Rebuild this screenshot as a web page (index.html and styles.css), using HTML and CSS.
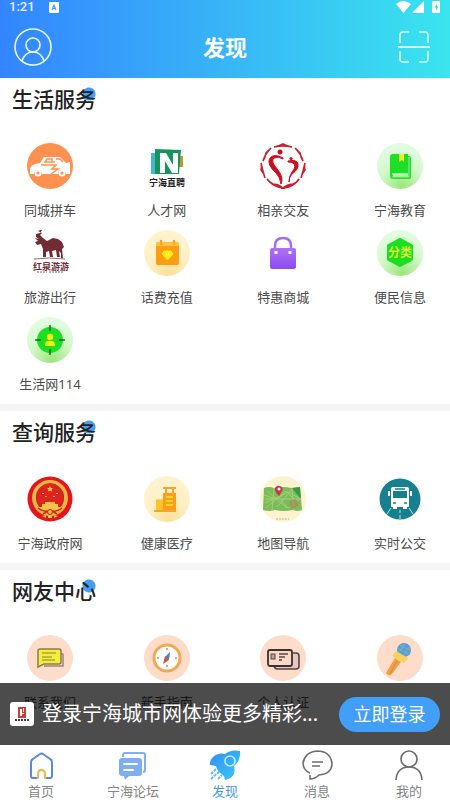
FILE: index.html
```html
<!DOCTYPE html>
<html lang="zh-CN">
<head>
<meta charset="utf-8">
<meta name="viewport" content="width=device-width, initial-scale=1">
<title>发现</title>
<link rel="stylesheet" href="styles.css">
</head>
<body>
<div class="app">
  <header class="top">
    <div class="status">
      <span class="time">1:21</span>
      <svg class="status-app" width="10" height="11" viewBox="0 0 10 11"><rect width="10" height="11" rx="1" fill="#fff"/><path d="M3 8 5 3l2 5M3.5 6.5h3" fill="none" stroke="#389bfb" stroke-width="1.2"/></svg>
      <svg class="status-signal" width="46" height="13" viewBox="0 0 46 13" fill="#fff"><path d="M0 3Q7-3 15 3L7.500 12Z"/><path d="M16 12 28 0v12Z"/><rect x="36" y="0" width="8" height="12" rx="1"/><path d="M41 3 38.500 6.500h1.500v3l2.500-4h-1.500Z" fill="#38d9ef"/></svg>
    </div>
    <div class="bar">
      <button class="icon-btn" aria-label="个人">
        <svg width="38" height="38" viewBox="0 0 38 38" fill="none" stroke="#e8fbff" stroke-width="1.6"><circle cx="19" cy="19" r="18"/><circle cx="19" cy="17" r="7"/><path d="M8 33C10 27 14 24 19 24s9 3 11 9"/></svg>
      </button>
      <h1>发现</h1>
      <button class="icon-btn" aria-label="扫一扫">
        <svg width="32" height="34" viewBox="0 0 32 34" fill="none" stroke="#d5fdff" stroke-width="1.6"><path d="M2 13V5q0-3 3-3h6M21 2h6q3 0 3 3v8M2 21v8q0 3 3 3h6M21 32h6q3 0 3-3v-8"/><path d="M0 17h32" stroke-width="2"/></svg>
      </button>
    </div>
  </header>

  <div class="stage">
    <main class="content">
      <section class="group">
        <h2><span>生活服务</span></h2>
        <div class="tiles">
          <a class="tile" href="#"><svg viewBox="0 0 46 46"><circle cx="23" cy="23" r="23" fill="#ff9150"/><path d="M13 20 17 14h16l6 6 4-1v12h-4a4 4 0 0 0-8 0H15a4 4 0 0 0-8 0H3v-6q2-4 10-5Z" fill="#fff"/><path d="M18 19l2-3h5v3ZM28 19h-8M29 16h4l3 3M14 22h15l-4 4h6l-7 5" fill="none" stroke="#ff9150" stroke-width="1.500"/><circle cx="11" cy="30" r="3.500" fill="#fff"/><circle cx="35" cy="30" r="3.500" fill="#fff"/><circle cx="11" cy="30" r="1.500" fill="#ff9150"/><circle cx="35" cy="30" r="1.500" fill="#ff9150"/></svg><span>同城拼车</span></a>
          <a class="tile" href="#"><svg viewBox="0 0 46 46"><path d="M7 10h6v21H7Z" fill="#46b5d0"/><path d="M33 13h6v11h-6Z" fill="#c19a2b"/><path d="M11 6l26 1-2 24H11Z" fill="#12965a"/><path d="M16 10h6l7 12V10h5v20h-6l-7-12v12h-5Z" fill="#fff"/><text x="5" y="43" class="logo-cn">宁海直聘</text></svg><span>人才网</span></a>
          <a class="tile" href="#"><svg viewBox="0 0 46 46"><path d="M14 4Q19 3 23 1q4 2 9 3-5-1-9-1t-9 1ZM35 5l5 5q1 5 3 8-2-7-8-13ZM45 20q-1 4 0 7-3 3-4 8 2-6 4-15ZM39 36q-1 3-6 5-5 0-10 4 11-1 16-9ZM23 45q-5-4-10-4-4-2-6-5 6 8 16 9ZM5 35q-1-5-4-8 1-3 0-7 2 9 4 15ZM3 18q2-3 3-8l5-5Q5 11 3 18Z" fill="#cc202d" stroke="#cc202d" stroke-width="1.600"/><circle cx="20" cy="9" r="2.500" fill="#c9101e"/><circle cx="31" cy="15.500" r="1.600" fill="#c9101e"/><path d="M23 15Q14 10 10 15q-4 6 6 15 4 4 5 11 3-6-3-14-8-9-4-12 4-2 9 1Z" fill="#c9101e" stroke="#c9101e"/><path d="M28 18q9-2 10 3 1 5-6 10-3 3-3 8 0-6 3-10 5-6 1-9-2-1-5-1Z" fill="#c9101e" stroke="#c9101e"/></svg><span>相亲交友</span></a>
          <a class="tile" href="#"><svg viewBox="0 0 46 46"><circle cx="23" cy="23" r="23" fill="url(#green)"/><path d="M16 11h15v20H16v3h15v-21q3 0 3 2v19q0 2-2 2H16q-3 0-3-3V14q0-3 3-3Z" fill="#1ddf29"/><path d="M15 31h16" stroke="#d5ffd2" stroke-width="1.300"/><path d="M15 34h17V14" fill="none" stroke="#92ef91"/><path d="M22 11h5v8l-2.500-2L22 19Z" fill="#eaf22c"/></svg><span>宁海教育</span></a>

          <a class="tile" href="#"><svg viewBox="0 0 46 46"><path d="M13 3 9 4v3l3 2-4-1 3 3-3 1 2 3 4-1 2 5v8h3v-5l3-1 1 6h3l-1-6 4-1 1 7h3l-1-6 2 2v5h2l-1-9 2-2-2-5-4-3-5-1-6 3-4-3-3-3 2-2-4-2 5-2Z" fill="#702b35"/><path d="M7 29q15-2 31 0" fill="none" stroke="#986b70"/><text x="6" y="40" class="logo-travel">红泉游游</text><path d="M10 42h10M22 42h14" stroke="#895f66" stroke-dasharray="2 1"/></svg><span>旅游出行</span></a>
          <a class="tile" href="#"><svg viewBox="0 0 46 46"><circle cx="23" cy="23" r="23" fill="url(#gold)"/><rect x="12" y="12" width="23" height="23" rx="2" fill="#ff9d12"/><path d="M12 16v-2q0-2 2-2h19q2 0 2 2v2Z" fill="#ffc443"/><path d="M17 11v3M30 11v3" stroke="#f7a622" stroke-width="2.500" stroke-linecap="round"/><path d="M20 21h7l2 3-5.500 6-5.500-6Z" fill="#ffef1c" stroke="#ffef1c" stroke-linejoin="round"/></svg><span>话费充值</span></a>
          <a class="tile" href="#"><svg viewBox="0 0 46 46"><path d="M15 21v-5q0-8 8-8t8 8v5" fill="none" stroke="#a96bed" stroke-width="2.500"/><path d="M12 18h22q2 0 2 2v17q0 2-2 2H12q-2 0-2-2V20q0-2 2-2Z" fill="url(#violet)"/><path d="M16 21v3M30 21v3" stroke="#fff" stroke-width="3"/></svg><span>特惠商城</span></a>
          <a class="tile" href="#"><svg viewBox="0 0 46 46"><circle cx="23" cy="23" r="23" fill="url(#green)"/><path d="M23 9 35 15.500v14L23 36 11 29.500v-14Z" fill="#1ade22" stroke="#1ade22" stroke-width="2" stroke-linejoin="round"/><text x="23" y="27" class="logo-class">分类</text></svg><span>便民信息</span></a>

          <a class="tile" href="#"><svg viewBox="0 0 46 46"><circle cx="23" cy="23" r="23" fill="url(#green)"/><circle cx="23" cy="23" r="13" fill="#1ddf22"/><path d="M23 8v6M23 32v6M8 23h6M32 23h6" stroke="#176b18" stroke-width="1.500"/><circle cx="23" cy="20" r="3.200" fill="#f0ed10"/><path d="M18 29q0-5 3-5h4q3 0 3 5Z" fill="#f0ed10"/></svg><span>生活网114</span></a>
        </div>
      </section>

      <section class="group">
        <h2><span>查询服务</span></h2>
        <div class="tiles">
          <a class="tile" href="#"><svg viewBox="0 0 46 46"><circle cx="23" cy="23" r="22.500" fill="#e8141b"/><circle cx="23" cy="22" r="16" fill="#df2420" stroke="#edb545" stroke-width="4"/><circle cx="23" cy="21" r="13.500" fill="none" stroke="#b82a1c"/><path d="M23 10l1 2h2l-1.500 1.500.5 2-2-1-2 1 .5-2L20 12h2ZM15 17h2v1h-2ZM29 17h2v1h-2ZM18 20h2v1h-2ZM26 20h2v1h-2ZM18 26h10v2h3v3H15v-3h3ZM12 31h22v3q-4 4-11 4t-11-4Z" fill="#f5c34a"/><path d="M11 32q5 4 9 3M35 32q-5 4-9 3M16 38l5-3M30 38l-5-3" stroke="#d5241b" stroke-width="1.500" fill="none"/><circle cx="23" cy="36" r="2.500" fill="#f4bd42" stroke="#cf241b"/><path d="m15 40 4-1v3ZM31 40l-4-1v3ZM21 40h4v2h-4Z" fill="#f8c54d"/></svg><span>宁海政府网</span></a>
          <a class="tile" href="#"><svg viewBox="0 0 46 46"><circle cx="23" cy="23" r="23" fill="url(#gold)"/><path d="M19 17h13v17H19Z" fill="#ff9d1b"/><path d="M19 11h13v2H19ZM21 13h2v4h-2ZM28 13h2v4h-2ZM10 34h22v2H10Z" fill="#f6a431"/><path d="M12 24h7v10h-7Z" fill="#ffc426"/><path d="M22 21h7M22 25h7M22 29h7" stroke="#ffd52b" stroke-width="2"/><path d="M12 24h7" stroke="#ffb334"/></svg><span>健康医疗</span></a>
          <a class="tile" href="#"><svg viewBox="0 0 46 46"><circle cx="23" cy="23" r="23" fill="#fff3cf"/><path d="M4 12q5-2 10 0 8-2 18 0l8-1 2 23q-5 2-9 0-9 2-18 0-6 2-12 0Z" fill="#7cbb5b"/><path d="m14 12-2 22M32 12l2 22M4 19l12 4 12-7 13 7M5 27l13-6 10 11 12-9M6 32l20-17 14 14M7 15l20 17M17 31 33 12M5 23h36" stroke="#a3d073" fill="none"/><path d="m32 12 8-1 1 12Z" fill="#3b984a"/><path d="m30 25 5-2 5 5-6 5-5-3Z" fill="#a38b56" opacity=".7"/><path d="M19 20Q14 15 15 12q2-3 5-2 4 2 2 5Z" fill="#ce3542"/><circle cx="19" cy="13" r="1.500" fill="#fff"/><path d="M16 43h13" stroke="#bbae8c" stroke-dasharray="2 1"/></svg><span>地图导航</span></a>
          <a class="tile" href="#"><svg viewBox="0 0 46 46"><circle cx="23" cy="23" r="20.500" fill="#17808e"/><path d="M14 13q0-2 2-2h14q2 0 2 2v17q0 1-1 1h-1v2h-4v-2h-6v2h-4v-2h-1q-1 0-1-1Z" fill="#fff"/><path d="M16 15h14v7H16Z" fill="#17808e"/><path d="M18 13h10M16 27h3M27 27h3" stroke="#17808e" stroke-width="1.500"/><path d="M12 15v5M34 15v5" stroke="#fff" stroke-width="2"/><path d="m14 32-4 6M32 32l4 6M23 34v3M23 39v4" stroke="#b9e2e4"/></svg><span>实时公交</span></a>
        </div>
      </section>

      <section class="group">
        <h2><span>网友中心</span></h2>
        <div class="tiles">
          <a class="tile" href="#"><svg viewBox="0 0 46 46"><circle cx="23" cy="23" r="23" fill="#fddcca"/><path d="M34 19h2v12H17" fill="none" stroke="#9c8780" stroke-width="1.500"/><path d="M13 14h19q2 0 2 2v11q0 2-2 2H17l-6 3V16q0-2 2-2Z" fill="#f4ed3d" stroke="#8b7d47" stroke-width="1.500"/><path d="M15 18h14M15 22h10M15 25h13" stroke="#8b8134" stroke-width="1.200"/></svg><span>联系我们</span></a>
          <a class="tile" href="#"><svg viewBox="0 0 46 46"><circle cx="23" cy="23" r="23" fill="#fddcca"/><circle cx="23" cy="23" r="13" fill="#fff" stroke="#edaa54" stroke-width="3"/><path d="M23 13v2M23 30v2M13 23h2M31 23h2" stroke="#d88775" stroke-width="1.500"/><path d="m26 17-1 8-4-3Z" fill="#477fc1"/><path d="m19 29 2-8 4 4Z" fill="#cf5141"/></svg><span>新手指南</span></a>
          <a class="tile" href="#"><svg viewBox="0 0 46 46"><circle cx="23" cy="23" r="23" fill="#fddcca"/><path d="M33 18h3q3 0 3 3v10q0 3-3 3H17q-2 0-3-3" fill="#e4c8c1" stroke="#574440" stroke-width="1.600"/><rect x="8" y="15" width="24" height="16" rx="2" fill="#f8d8c8" stroke="#3e302c" stroke-width="1.800"/><rect x="11" y="19" width="4" height="5" fill="#bba096" stroke="#5b4741"/><path d="M19 19h9M19 22h6M19 25h3" stroke="#5b4741" stroke-width="1.400"/></svg><span>个人认证</span></a>
          <a class="tile" href="#" aria-label="话筒"><svg viewBox="0 0 46 46"><circle cx="23" cy="23" r="23" fill="#fddcca"/><path d="m18 23 6 4-10 13q-3 1-5-2Z" fill="#f1a043"/><path d="m20 26-7 13" stroke="#d68749"/><circle cx="27" cy="15" r="7" fill="#5b9ed0"/><path d="m21 13 12 7M23 10l11 6M29 8l-7 9M33 11l-6 9" stroke="#78afd3"/><path d="m19 16 12 7-4 5-12-7Z" fill="#f5d35b"/></svg><span></span></a>
        </div>
      </section>
    </main>

    <aside class="login">
      <svg class="login-logo" viewBox="0 0 24 24"><rect width="24" height="24" rx="3" fill="#fff"/><path d="M8 5h8v11H8Z" fill="#c93c3c"/><path d="M10 7h2v7h-2ZM13 6h1v4h-1ZM12 11h2v1h-2Z" fill="#fff"/><path d="M5 18h14" stroke="#4c3a3a" stroke-width="2" stroke-dasharray="2 1"/></svg>
      <p>登录宁海城市网体验更多精彩...</p>
      <button class="login-btn">立即登录</button>
    </aside>
  </div>

  <nav class="tabs">
    <a class="tab" href="#"><svg viewBox="0 0 32 32" fill="none" stroke-width="2" stroke-linecap="round"><path d="M12 29H8q-2 0-2-2V13q0-2 2-3l7-5q1-1 3 0l7 5q2 1 2 3v14q0 2-2 2h-4" stroke="#578bdf"/><path d="M13 29v-4q0-4 3.500-4t3.500 4v4" stroke="#edb849"/></svg><span>首页</span></a>
    <a class="tab" href="#"><svg viewBox="0 0 32 32"><path d="M6 8V6q0-2 2-2h18q2 0 2 2v15q0 2-2 2" fill="none" stroke="#82afed" stroke-width="2"/><path d="M5 9h17q3 0 3 3v12q0 3-3 3H12l-4 4-1-4H5q-3 0-3-3V12q0-3 3-3Z" fill="#7caef0"/><path d="M7 15h13M7 21h9" stroke="#fff" stroke-width="2" stroke-linecap="round"/></svg><span>宁海论坛</span></a>
    <a class="tab active" href="#" aria-current="page"><svg viewBox="0 0 32 32"><path d="M31 2Q22 0 16 5 9 3 4 8 0 12 1 16l6 1q1 5 8 10l1 4q6-1 9-6 1-4 0-8 7-6 6-15Z" fill="url(#rocket)"/><circle cx="21" cy="12" r="5" fill="none" stroke="#bdedff" stroke-width="1.600"/><path d="m2 25 5-5M2 30l9-8M9 30l4-4" stroke="#63baff" stroke-width="2" stroke-dasharray="3 1"/></svg><span>发现</span></a>
    <a class="tab" href="#"><svg viewBox="0 0 32 32" fill="none" stroke="#6e6e6e" stroke-width="1.600"><path d="M9 26v4q5 0 9-4 13-1 13-12Q29 2 16 2 4 3 2 14q0 7 7 10"/><path d="M11 13h11M11 17h8"/></svg><span>消息</span></a>
    <a class="tab" href="#"><svg viewBox="0 0 32 32" fill="none" stroke="#6e6e6e" stroke-width="1.600"><circle cx="16" cy="10" r="8"/><path d="M3 31Q4 18 16 18t13 13"/></svg><span>我的</span></a>
  </nav>
</div>

<svg class="defs" width="0" height="0" aria-hidden="true">
  <defs>
    <radialGradient id="green" cx=".55" cy=".95" r=".9"><stop offset="0" stop-color="#9be67c"/><stop offset=".55" stop-color="#d3f8ca"/><stop offset="1" stop-color="#e2fce2"/></radialGradient>
    <radialGradient id="gold" cx=".55" cy=".95" r=".8"><stop offset="0" stop-color="#ffe096"/><stop offset=".6" stop-color="#fff0c4"/><stop offset="1" stop-color="#fff2cd"/></radialGradient>
    <linearGradient id="violet" x2="0" y2="1"><stop offset="0" stop-color="#b071f2"/><stop offset="1" stop-color="#8a4cf3"/></linearGradient>
    <linearGradient id="rocket" x1="0" x2="1" y2="1"><stop offset="0" stop-color="#318df8"/><stop offset="1" stop-color="#3bcaf7"/></linearGradient>
  </defs>
</svg>
</body>
</html>
```
FILE: styles.css
```css
* {
  box-sizing: border-box;
}

body,
h1,
h2,
p {
  margin: 0;
}

body {
  background: #fff;
  color: #4b4b4b;
  font-family: "Noto Sans", "Noto Sans CJK SC", sans-serif;
}

a {
  color: inherit;
  text-decoration: none;
}

button {
  border: 0;
  padding: 0;
  background: none;
  font: inherit;
}

svg {
  display: block;
}

.defs {
  position: absolute;
}

.app {
  display: flex;
  flex-direction: column;
  height: 100vh;
}

/* Header */
.top {
  background: linear-gradient(90deg, #3385ff, #38b5f7 50%, #39e5ee);
  color: #fff;
}

.status {
  display: flex;
  align-items: center;
  height: 14px;
  padding: 0 8px 0 9px;
}

.time {
  color: #e3f1ff;
  font: 500 13px/14px Roboto, sans-serif;
}

.status-app {
  margin-left: 14px;
}

.status-signal {
  margin-left: auto;
}

.bar {
  display: flex;
  align-items: center;
  justify-content: space-between;
  padding: 13px 20px 11px 14px;
}

.bar h1 {
  font-size: 22px;
  font-weight: 700;
  line-height: 40px;
}

/* Content */
.stage {
  position: relative;
  flex: 1;
  min-height: 0;
}

.content {
  height: 100%;
  overflow-y: auto;
  scrollbar-width: none;
}

.group {
  padding-bottom: 10px;
}

.group + .group {
  border-top: 7px solid #f5f5f5;
}

.group h2 {
  margin-bottom: 23px;
  padding-left: 12px;
  color: #222;
  font-size: 21px;
  font-weight: 500;
  line-height: 42px;
}

.group h2 span {
  background: radial-gradient(circle at 77px 9px, #429ff5 6px, transparent 7px);
}

.tiles {
  display: grid;
  grid-template-columns: repeat(4, 82px);
  justify-content: space-between;
  row-gap: 10px;
  padding: 0 9px;
}

.tile {
  display: flex;
  flex-direction: column;
  align-items: center;
  gap: 11px;
}

.tile svg {
  width: 46px;
  height: 46px;
}

.tile span {
  min-height: 20px;
  font-size: 13px;
  line-height: 20px;
  white-space: nowrap;
}

.logo-cn {
  fill: #222;
  font-size: 9px;
  font-weight: 700;
}

.logo-travel {
  fill: #702b35;
  font-size: 9px;
  font-weight: 700;
}

.logo-class {
  fill: #d9ee35;
  font-size: 12px;
  font-weight: 700;
  text-anchor: middle;
}

/* Login prompt */
.login {
  position: absolute;
  right: 0;
  bottom: 0;
  left: 0;
  display: flex;
  align-items: center;
  height: 62px;
  padding: 0 10px;
  background: rgba(0, 0, 0, 0.7);
  color: #fff;
}

.login-logo {
  width: 24px;
  height: 24px;
  margin-right: 8px;
}

.login p {
  flex: 1;
  overflow: hidden;
  font-size: 20px;
  line-height: 28px;
  white-space: nowrap;
}

.login-btn {
  width: 101px;
  height: 35px;
  border-radius: 18px;
  background: #429ff8;
  color: #fff;
  font-size: 18px;
  line-height: 35px;
}

/* Bottom tabs */
.tabs {
  display: flex;
  justify-content: space-between;
  height: 55px;
  padding-top: 4px;
  background: #fff;
}

.tab {
  display: flex;
  flex: 0 0 82px;
  flex-direction: column;
  align-items: center;
  gap: 2px;
  color: #858585;
  font-size: 13px;
  line-height: 16px;
}

.tab svg {
  width: 32px;
  height: 32px;
}

.tab.active {
  color: #4598f0;
}
```
